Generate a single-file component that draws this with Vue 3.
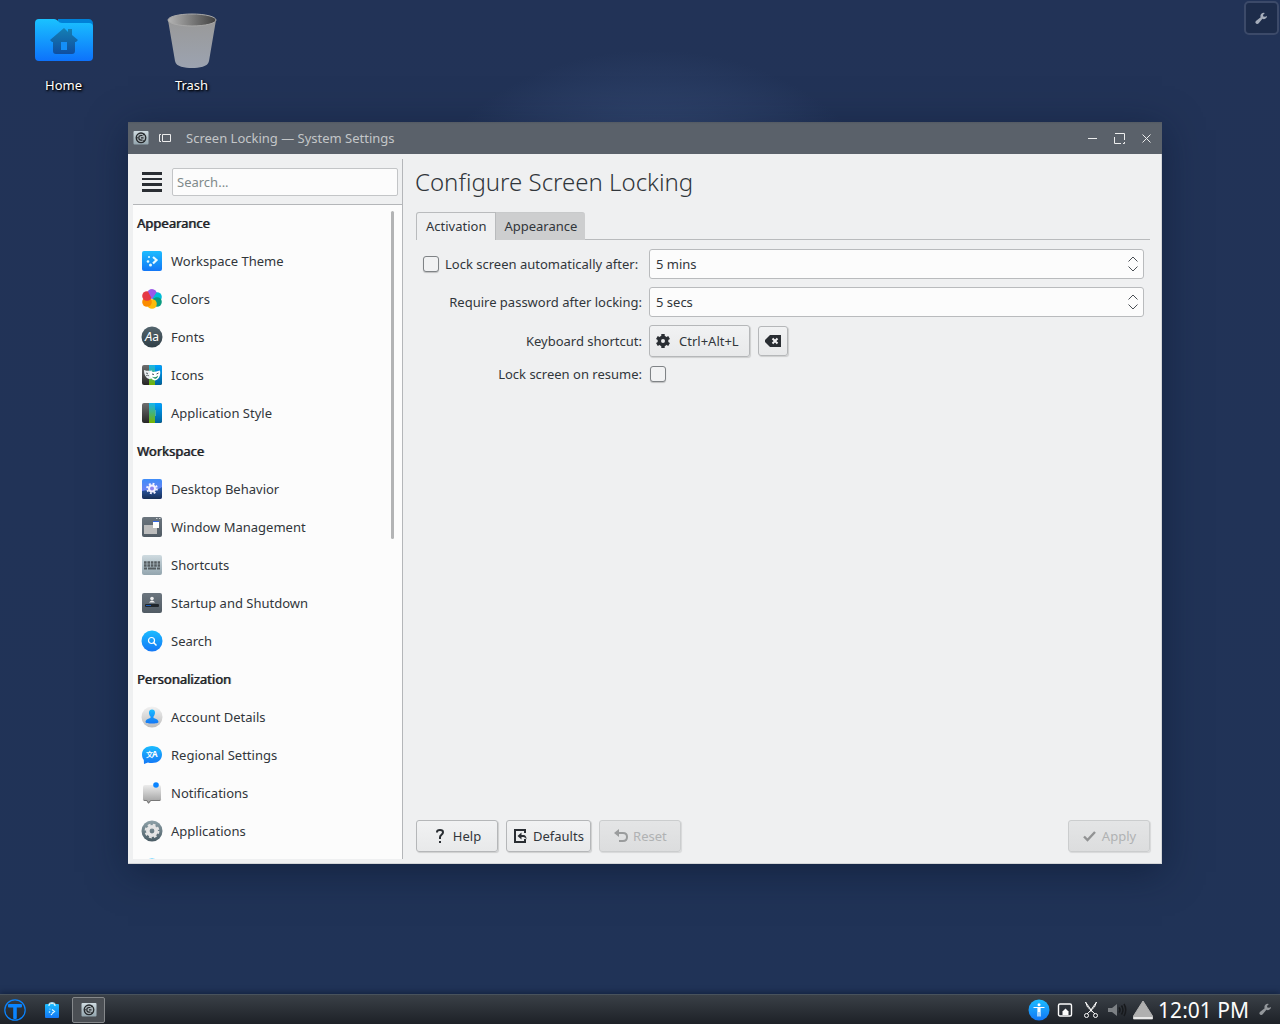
<script setup>
import { ref } from 'vue'

const lockDelay = ref('5 mins')
const passwordDelay = ref('5 secs')
const autoLock = ref(false)
const lockOnResume = ref(false)

const sections = [
  {
    title: 'Appearance',
    items: [
      { icon: 'theme', label: 'Workspace Theme' },
      { icon: 'colors', label: 'Colors' },
      { icon: 'fonts', label: 'Fonts' },
      { icon: 'icons', label: 'Icons' },
      { icon: 'style', label: 'Application Style' },
    ],
  },
  {
    title: 'Workspace',
    items: [
      { icon: 'desktop', label: 'Desktop Behavior' },
      { icon: 'window', label: 'Window Management' },
      { icon: 'shortcuts', label: 'Shortcuts' },
      { icon: 'startup', label: 'Startup and Shutdown' },
      { icon: 'search', label: 'Search' },
    ],
  },
  {
    title: 'Personalization',
    items: [
      { icon: 'account', label: 'Account Details' },
      { icon: 'regional', label: 'Regional Settings' },
      { icon: 'notifications', label: 'Notifications' },
      { icon: 'applications', label: 'Applications' },
      { icon: 'accounts', label: '' },
    ],
  },
]

const petals = [
  { x: 11, y: 6, c: '#9b59e8' },
  { x: 16, y: 9, c: '#00bcd8' },
  { x: 16, y: 14, c: '#0a9c80' },
  { x: 11, y: 16, c: '#fdbc0b' },
  { x: 6, y: 14, c: '#fb8c00' },
  { x: 6, y: 8, c: '#e53945' },
]
</script>

<template>
  <div class="screen">
    <svg class="defs" width="0" height="0" aria-hidden="true">
      <defs>
        <linearGradient id="blue" x1="0" y1="0" x2="0" y2="1"><stop offset="0" stop-color="#1cbcff" /><stop offset="1" stop-color="#1377f6" /></linearGradient>
        <linearGradient id="slate" x1="0" y1="0" x2="0" y2="1"><stop offset="0" stop-color="#54656e" /><stop offset="1" stop-color="#303e46" /></linearGradient>
        <linearGradient id="grey" x1="0" y1="0" x2="0" y2="1"><stop offset="0" stop-color="#6b757e" /><stop offset="1" stop-color="#515b64" /></linearGradient>
        <linearGradient id="pale" x1="0" y1="0" x2="0" y2="1"><stop offset="0" stop-color="#cfdbe0" /><stop offset="1" stop-color="#93a5ae" /></linearGradient>
        <linearGradient id="silver" x1="0" y1="0" x2="0" y2="1"><stop offset="0" stop-color="#f2f2f2" /><stop offset="1" stop-color="#bcbcbc" /></linearGradient>
        <linearGradient id="silver2" x1="0" y1="0" x2="0" y2="1"><stop offset="0" stop-color="#ececec" /><stop offset="1" stop-color="#999" /></linearGradient>
        <linearGradient id="steel" x1="0" y1="0" x2="0" y2="1"><stop offset="0" stop-color="#8fa2a9" /><stop offset="1" stop-color="#495b64" /></linearGradient>
        <linearGradient id="dark" x1="0" y1="0" x2="0" y2="1"><stop offset="0" stop-color="#6e6e6e" /><stop offset="1" stop-color="#262626" /></linearGradient>
        <linearGradient id="cyangreen" x1="0" y1="0" x2="0" y2="1"><stop offset="0" stop-color="#16b4ec" /><stop offset="1" stop-color="#76b300" /></linearGradient>
        <linearGradient id="deep" x1="0" y1="0" x2="0" y2="1"><stop offset="0" stop-color="#00a2ff" /><stop offset="1" stop-color="#00629a" /></linearGradient>
        <linearGradient id="sky" x1="0" y1="0" x2="0" y2="1"><stop offset="0" stop-color="#3f8df8" /><stop offset="1" stop-color="#8f7af0" /></linearGradient>
        <linearGradient id="night" x1="0" y1="0" x2="0" y2="1"><stop offset="0" stop-color="#2f5fb4" /><stop offset="1" stop-color="#172f55" /></linearGradient>
        <linearGradient id="folder" x1="0" y1="0" x2="0" y2="1"><stop offset="0" stop-color="#1ac2ff" /><stop offset="1" stop-color="#0d72fb" /></linearGradient>
        <linearGradient id="house" x1="0" y1="0" x2="0" y2="1"><stop offset="0" stop-color="#1580b4" /><stop offset="1" stop-color="#0f4ea0" /></linearGradient>
        <linearGradient id="bin" x1="0" y1="0" x2="0" y2="1"><stop offset="0" stop-color="#999" /><stop offset="1" stop-color="#9ca3b0" /></linearGradient>
        <linearGradient id="binhole" x1="0" y1="0" x2="1" y2="0"><stop offset="0" stop-color="#b4b4b4" /><stop offset="1" stop-color="#404040" /></linearGradient>
        <symbol id="wrench" viewBox="0 0 14 14">
          <path d="M13 4.200a3.600 3.600 0 0 1-5 3.200L4 12.200a1.900 1.900 0 0 1-3-2.600L6.100 5.700A3.600 3.600 0 0 1 10.600 1L8.600 3.100l.4 1.800 1.900.3z" />
        </symbol>
        <symbol id="lockapp" viewBox="0 0 16 16">
          <rect x="0.500" y="1" width="15" height="13.500" rx="1" fill="url(#pale)" />
          <circle cx="8" cy="7.800" r="4.800" fill="#a9b3b8" stroke="#25282b" stroke-width="1.300" />
          <path d="M9.500 5.500H8q-2.200 0-2.200 2.300T8 10.100h1.500M8 7.800h2.500" fill="none" stroke="#25282b" stroke-width="1.200" />
          <path d="M3.500 7.800h1.500M10 5l1.500-1M10 10.500l1.500 1" stroke="#25282b" />
        </symbol>
      </defs>
    </svg>

    <main class="desktop">
      <div class="shortcuts">
        <a class="shortcut" href="#home">
          <svg width="64" height="64" viewBox="0 0 64 64" aria-hidden="true">
            <path d="M26 11h31a5 5 0 0 1 4 5v14H26z" fill="#0081d8" />
            <path d="M7 11h15c4 0 4 4 8 4h27a4 4 0 0 1 4 4v30a4 4 0 0 1-4 4H7a4 4 0 0 1-4-4V15a4 4 0 0 1 4-4z" fill="url(#folder)" />
            <path d="M32 20l4 4v-3h4v6l6 5-2 2h-1v9a3 3 0 0 1-3 3H24a3 3 0 0 1-3-3v-9h-1l-2-2z" fill="url(#house)" />
            <rect x="29" y="34" width="6" height="8" fill="#148ff9" />
          </svg>
          <span>Home</span>
        </a>
        <a class="shortcut" href="#trash">
          <svg width="64" height="64" viewBox="0 0 64 64" aria-hidden="true">
            <path d="M8 12h48l-7 41c-1 6-10 7-17 7s-16-1-17-7z" fill="url(#bin)" />
            <ellipse cx="32" cy="12" rx="24" ry="6" fill="url(#binhole)" stroke="#a9a9a9" />
          </svg>
          <span>Trash</span>
        </a>
      </div>

      <button class="toolbox" type="button" aria-label="Configure desktop">
        <svg width="13" height="13"><use href="#wrench" /></svg>
      </button>

      <section class="window">
        <header class="titlebar">
          <svg width="16" height="16" aria-hidden="true"><use href="#lockapp" /></svg>
          <svg class="pin" width="12" height="8" viewBox="0 0 12 8" aria-hidden="true"><path d="M2 .5H.5v7H2M3.500 .5h8v7h-8z" fill="none" stroke="#eceded" /></svg>
          <h2>Screen Locking — System Settings</h2>
          <div class="controls">
            <button type="button" aria-label="Minimize"><svg width="11" height="11"><path d="M1 5.500h9" /></svg></button>
            <button type="button" aria-label="Maximize"><svg width="11" height="11"><path d="M1 .5h9.500V7M.5 4v6.500H7M9 10.500h1.500V9" /></svg></button>
            <button type="button" aria-label="Close"><svg width="11" height="11"><path d="M1.500 1.500l8 8M9.500 1.500l-8 8" /></svg></button>
          </div>
        </header>

        <div class="body">
          <aside class="sidebar">
            <div class="searchbar">
              <button class="menu" type="button" aria-label="Menu">
                <svg width="20" height="20" fill="#2a2e33"><rect width="20" height="3" /><rect y="6" width="20" height="2" /><rect y="11" width="20" height="3" /><rect y="17" width="20" height="3" /></svg>
              </button>
              <input type="search" placeholder="Search..." aria-label="Search" />
            </div>
            <div class="listwrap">
              <nav class="list">
                <template v-for="section in sections" :key="section.title">
                  <h3>{{ section.title }}</h3>
                  <a v-for="item in section.items" :key="item.icon" class="item" :href="'#' + item.icon">
                    <svg width="22" height="22" viewBox="0 0 22 22" aria-hidden="true">
                      <g v-if="item.icon === 'theme'">
                        <rect x="1" y="1" width="20" height="20" rx="2" fill="url(#blue)" />
                        <path d="M12 7l3.500 3L12 13.500" fill="none" stroke="#e8fbff" stroke-width="2.200" />
                        <g fill="#e8fbff"><circle cx="8" cy="7" r="1" /><circle cx="7" cy="11.500" r="1.300" /><circle cx="9.500" cy="15" r="1.500" /></g>
                      </g>
                      <g v-else-if="item.icon === 'colors'">
                        <circle v-for="p in petals" :key="p.c" :cx="p.x" :cy="p.y" r="4.800" :fill="p.c" />
                        <path d="M11 11L7 3.500a4.800 4.800 0 0 1 8.500 1L11 11z" fill="#9b59e8" />
                      </g>
                      <g v-else-if="item.icon === 'fonts'">
                        <circle cx="11" cy="11" r="10.500" fill="url(#slate)" />
                        <text x="4" y="15" font-family="Noto Sans, sans-serif" font-size="13" fill="#fff"><tspan font-style="italic">A</tspan><tspan font-size="12">a</tspan></text>
                      </g>
                      <g v-else-if="item.icon === 'icons' || item.icon === 'style'">
                        <rect x="1" y="1" width="20" height="20" rx="2" fill="url(#dark)" />
                        <path d="M14 1h5a2 2 0 0 1 2 2v16a2 2 0 0 1-2 2h-5z" fill="url(#deep)" />
                        <rect x="8" y="1" width="6" height="20" fill="url(#cyangreen)" />
                        <g v-if="item.icon === 'icons'">
                          <path d="M3 6c3 1 5 1 8 .5l1 5c-1 3-3 4-4 3.500-3-1-5-4-5-9z" fill="#e9eef0" />
                          <path d="M9 7.500c4 1 6 0 10-1 1 5-1 9-5 10-4-1-6-4-5-9z" fill="#fff" />
                          <path d="M11 10l2 .5M15.500 10l2-1" fill="none" stroke="#456" />
                          <path d="M11 12.500c2 1.500 4 1 6-1-.5 4-4 4-6 1z" fill="#168b5a" />
                          <path d="M5 9l2 .5M5 12c1-1 2-1 3 0" fill="none" stroke="#5b6266" />
                        </g>
                        <rect v-else x="14" y="8" width="1" height="6" fill="#47aeb0" />
                      </g>
                      <g v-else-if="item.icon === 'desktop'">
                        <rect x="1" y="1" width="20" height="20" rx="2" fill="url(#sky)" />
                        <path d="M1 13l5-1 5 1 5-1 5-3v10a2 2 0 0 1-2 2H3a2 2 0 0 1-2-2z" fill="url(#night)" />
                        <circle cx="11" cy="10.500" r="3" fill="#8f84f0" stroke="#f4f2ff" stroke-width="2" />
                        <circle cx="11" cy="10.500" r="4.800" fill="none" stroke="#f4f2ff" stroke-width="2" stroke-dasharray="1.885 1.885" />
                      </g>
                      <g v-else-if="item.icon === 'window'">
                        <rect x="1" y="1" width="20" height="20" rx="2" fill="url(#grey)" />
                        <path d="M15 2.500h1.500M18 2.500h1.500" stroke="#ccd0d3" />
                        <rect x="3" y="9" width="13" height="9" fill="#bcbcbc" />
                        <rect x="12" y="6" width="6" height="6" fill="#fff" /><rect x="12" y="5" width="6" height="1" fill="#3268e8" />
                      </g>
                      <g v-else-if="item.icon === 'shortcuts'">
                        <rect x="1" y="1" width="20" height="20" rx="2" fill="url(#pale)" />
                        <path d="M3 8.500h16M3 11.500h16" stroke="#555c60" stroke-width="2.400" stroke-dasharray="2.600 .8" />
                        <path d="M3 14.500h3M7 14.500h8M16 14.500h3" stroke="#555c60" stroke-width="2" />
                      </g>
                      <g v-else-if="item.icon === 'startup'">
                        <rect x="1" y="1" width="20" height="20" rx="2" fill="url(#grey)" />
                        <circle cx="11" cy="6.500" r="1.800" fill="#eee" /><path d="M8 10.500q3-4 6 0z" fill="#eee" />
                        <rect x="4" y="12" width="14" height="3" rx="1" fill="#20262c" /><rect x="5" y="13" width="5" height="1" fill="#1d5cb9" />
                      </g>
                      <g v-else-if="item.icon === 'search'">
                        <circle cx="11" cy="11" r="10.500" fill="url(#blue)" />
                        <circle cx="10.500" cy="10.500" r="3" fill="none" stroke="#fff" stroke-width="1.200" /><path d="M12.500 12.500l3 3" stroke="#fff" stroke-width="1.400" />
                      </g>
                      <g v-else-if="item.icon === 'account'">
                        <circle cx="11" cy="11" r="10.500" fill="url(#silver)" />
                        <path d="M11 3.500c4 0 3.500 5 1.500 7v1.500c2 .8 5 1.500 5 4 0 1-3 1.500-6.500 1.500s-6.500-.5-6.500-1.500c0-2.500 3-3.200 5-4v-1.500c-2-2-2.500-7 1.500-7z" fill="url(#blue)" />
                      </g>
                      <g v-else-if="item.icon === 'regional'">
                        <path d="M11 2c6 0 10 3.500 10 8.500S17 19 11 19c-2 0-3 0-4-.5L3 20l-.2-4C1.500 14.500 1 12.500 1 10.500 1 5.500 5 2 11 2z" fill="url(#blue)" />
                        <text x="5" y="13" font-size="7" font-weight="700" fill="#fff" font-family="Noto Sans CJK SC, sans-serif">文<tspan font-family="Noto Sans, sans-serif" font-size="8" x="11">A</tspan></text>
                      </g>
                      <g v-else-if="item.icon === 'notifications'">
                        <path d="M4 3h14a2 2 0 0 1 2 2v12a2 2 0 0 1-2 2h-8l-2.500 3L5.500 19H4a2 2 0 0 1-2-2V5a2 2 0 0 1 2-2z" fill="url(#silver2)" />
                        <path d="M2.500 17.800q0 .7 1.500.7h2l1.500 2.500 2-2.500H18q1.500 0 1.500-.7" fill="none" stroke="#777" />
                        <circle cx="15" cy="3" r="2.800" fill="#0a84ff" />
                      </g>
                      <g v-else-if="item.icon === 'applications'">
                        <circle cx="11" cy="11" r="10.500" fill="url(#steel)" />
                        <circle cx="11" cy="11" r="4.200" fill="none" stroke="#e4e4e4" stroke-width="3.600" />
                        <circle cx="11" cy="11" r="6.400" fill="none" stroke="#e4e4e4" stroke-width="2" stroke-dasharray="2.800 2.227" />
                      </g>
                      <circle v-else cx="11" cy="11" r="10.500" fill="url(#blue)" />
                    </svg>
                    <span>{{ item.label }}</span>
                  </a>
                </template>
              </nav>
              <div class="scroll"><div class="thumb"></div></div>
            </div>
          </aside>

          <section class="content">
            <h1>Configure Screen Locking</h1>
            <div class="tabs" role="tablist">
              <button class="tab active" type="button" role="tab" aria-selected="true">Activation</button>
              <button class="tab" type="button" role="tab" aria-selected="false">Appearance</button>
            </div>

            <form class="form" @submit.prevent>
              <div class="label check">
                <input id="auto" v-model="autoLock" type="checkbox" />
                <label for="auto">Lock screen automatically after:</label>
              </div>
              <div class="spin">
                <input v-model="lockDelay" type="text" aria-label="Lock delay" />
                <span class="steps">
                  <button type="button" aria-label="Increase"><svg width="10" height="6"><path d="M.5 5.500L5 1l4.500 4.500" /></svg></button>
                  <button type="button" aria-label="Decrease"><svg width="10" height="6"><path d="M.5 .5L5 5l4.500-4.500" /></svg></button>
                </span>
              </div>

              <label class="label" for="pwd">Require password after locking:</label>
              <div class="spin">
                <input id="pwd" v-model="passwordDelay" type="text" />
                <span class="steps">
                  <button type="button" aria-label="Increase"><svg width="10" height="6"><path d="M.5 5.500L5 1l4.500 4.500" /></svg></button>
                  <button type="button" aria-label="Decrease"><svg width="10" height="6"><path d="M.5 .5L5 5l4.500-4.500" /></svg></button>
                </span>
              </div>

              <label class="label" for="key">Keyboard shortcut:</label>
              <div class="keys">
                <button id="key" class="btn key" type="button">
                  <svg width="14" height="14" viewBox="0 0 14 14" fill="none" stroke="#2a2e33" aria-hidden="true"><circle cx="7" cy="7" r="3.700" stroke-width="3.400" /><path d="M7 0v2.500M7 11.500V14M.9 3.500l2.200 1.300M10.900 9.200l2.200 1.300M.9 10.500l2.200-1.300M10.900 4.800l2.200-1.300" stroke-width="3.400" /></svg>
                  Ctrl+Alt+L
                </button>
                <button class="btn clear" type="button" aria-label="Clear shortcut">
                  <svg width="16" height="12" viewBox="0 0 16 12"><path d="M5 0h11v12H5L0 7V5z" fill="#2a2e33" /><path d="M7.500 3.500l5 5M12.500 3.500l-5 5" stroke="#f4f4f5" stroke-width="2" /></svg>
                </button>
              </div>

              <label class="label" for="resume">Lock screen on resume:</label>
              <div class="resume"><input id="resume" v-model="lockOnResume" type="checkbox" /></div>
            </form>

            <footer class="actions">
              <button class="btn wide" type="button">
                <svg width="16" height="16" viewBox="0 0 16 16" aria-hidden="true"><path d="M4 4.500V4q0-2 3-2t3 2.200q0 1.300-1.500 2.500T7 9.300V11" fill="none" stroke="#2a2e33" stroke-width="2" /><rect x="6" y="13" width="2" height="2" fill="#2a2e33" /></svg>
                Help
              </button>
              <button class="btn" type="button">
                <svg width="16" height="16" viewBox="0 0 16 16" aria-hidden="true"><path d="M12 5V2H2v12h10v-3" fill="none" stroke="#2a2e33" stroke-width="2" /><path d="M4.500 8l4-3.500V7h2q3 0 3 4.500Q12.500 9 10.500 9h-2v2.500z" fill="#2a2e33" /></svg>
                Defaults
              </button>
              <button class="btn wide" type="button" disabled>
                <svg width="16" height="16" viewBox="0 0 16 16" aria-hidden="true"><path d="M4 5h6q4 0 4 4t-4 4H6" fill="none" stroke="#9a9c9d" stroke-width="2" /><path d="M1 5l5-4v8z" fill="#9a9c9d" /></svg>
                Reset
              </button>
              <button class="btn wide apply" type="button" disabled>
                <svg width="16" height="16" viewBox="0 0 16 16" aria-hidden="true"><path d="M2 8.500l3.500 3.500L13 4" fill="none" stroke="#929394" stroke-width="2.400" /></svg>
                Apply
              </button>
            </footer>
          </section>
        </div>
      </section>
    </main>

    <footer class="panel">
      <button class="start" type="button" aria-label="Application launcher">
        <svg width="22" height="22" viewBox="0 0 22 22"><circle cx="11" cy="11" r="10.200" fill="none" stroke="#0a84ff" stroke-width="1.200" /><g fill="#0a84ff"><rect x="4" y="5" width="14" height="3.500" rx="1" /><rect x="9.200" y="6" width="3.600" height="14" rx="1" /></g></svg>
      </button>
      <button class="task launcher" type="button" aria-label="Discover">
        <svg width="16" height="18" viewBox="0 0 16 18"><path d="M4.500 6V4q0-2.500 3.500-2.500T11.500 4v2" fill="none" stroke="#a5dcf3" /><rect x="1" y="3" width="14" height="14" rx="1" fill="url(#blue)" /><path d="M5 5v-.5q0-2 3-2t3 2V5M8 8.500l2.500 2L8 12.500" fill="none" stroke="#e4faff" stroke-width="1.200" /><g fill="#e4faff"><circle cx="6" cy="8" r=".6" /><circle cx="5.500" cy="11" r=".8" /><circle cx="7.500" cy="13.500" r=".8" /></g></svg>
      </button>
      <button class="task current" type="button" aria-label="Screen Locking">
        <svg width="16" height="16"><use href="#lockapp" /></svg>
      </button>
      <div class="tray">
        <svg class="access" width="22" height="22" viewBox="0 0 22 22"><circle cx="11" cy="11" r="10.500" fill="url(#blue)" /><circle cx="11" cy="5.800" r="1.500" fill="#fff" /><path d="M5.500 8.500h11M11 8v5M10 9v8.500M12 9v8.500" stroke="#fff" stroke-width="1.200" /></svg>
        <svg width="16" height="16" viewBox="0 0 16 16"><rect x="1.500" y="2" width="13" height="12" rx="1.500" fill="none" stroke="#fcfcfc" stroke-width="1.400" /><path d="M5.500 13V9.500l3-3 3 3V13z" fill="#fcfcfc" /></svg>
        <svg class="scissors" width="16" height="18" viewBox="0 0 16 18" fill="none" stroke="#fcfcfc"><path d="M2.500 1l2 5 7.500 7M13.500 1l-2 5L4 13M2.500 1L9.500 11M13.500 1l-7 10" /><circle cx="3.500" cy="14.500" r="2" /><circle cx="12.500" cy="14.500" r="2" /></svg>
        <svg class="volume" width="20" height="16" viewBox="0 0 20 16"><path d="M1 6h4l5-4v12l-5-4H1z" fill="#7c8084" /><path d="M12 5.500q2 2.500 0 5M14.500 3.500q3 4.500 0 9M17 2q3.500 6 0 12" fill="none" stroke="#17191c" stroke-width="1.500" /></svg>
        <svg class="arrow" width="22" height="22" viewBox="0 0 22 22"><path d="M11 2L20.500 17v3h-19v-3z" fill="#b0b0b0" stroke="#b0b0b0" stroke-linejoin="round" /><path d="M1.500 18h19v2h-19z" fill="#e8e8e8" /></svg>
        <time>12:01 PM</time>
        <button class="config" type="button" aria-label="Panel settings"><svg width="13" height="13"><use href="#wrench" /></svg></button>
      </div>
    </footer>
  </div>
</template>

<style>
body { margin: 0; }
</style>

<style scoped>
.screen, .screen * { box-sizing: border-box; }
.screen {
  display: flex;
  flex-direction: column;
  height: 100vh;
  overflow: hidden;
  font: 13px/18px "Noto Sans", sans-serif;
  color: #31363b;
  background: #213357;
}
.defs { position: absolute; }
svg { display: block; flex: none; }
button, input { font: inherit; color: inherit; margin: 0; padding: 0; }
button { background: none; border: 0; }
a { color: inherit; text-decoration: none; }
h1, h2, h3 { margin: 0; font-weight: 400; }

.desktop {
  position: relative;
  flex: 1;
  min-height: 0;
  background:
    radial-gradient(ellipse 250px 200px at 51% 250px, #405783 0%, #3a507c 40%, rgba(46, 66, 106, .7) 75%, rgba(33, 51, 87, 0) 100%),
    linear-gradient(#223357, #203357);
}
.shortcuts { display: flex; padding-top: 8px; }
.shortcut {
  display: flex;
  flex-direction: column;
  align-items: center;
  width: 128px;
  gap: 4px;
  color: #fff;
  text-shadow: 1px 1px 2px #000, 1px 1px 3px #000;
}
.shortcut span { padding-right: 1px; }
.toolbox {
  position: absolute;
  top: 1px;
  right: 1px;
  width: 35px;
  height: 34px;
  display: grid;
  place-items: center;
  border: 2px solid #3c4a69;
  border-radius: 5px;
  background: #1d2c4a;
}
.toolbox svg { fill: #a5adbb; }

.window {
  position: absolute;
  top: 122px;
  left: 128px;
  right: 118px;
  bottom: 130px;
  display: flex;
  flex-direction: column;
  background: #eff0f1;
  box-shadow: 0 8px 36px rgba(8, 20, 44, .5);
}
.titlebar {
  display: flex;
  align-items: center;
  height: 32px;
  padding: 0 10px 0 5px;
  background: linear-gradient(#535a63 0, #5a616a 2px, #5a616a);
  color: #c3c6c8;
}
.pin { margin: 0 15px 0 10px; }
.titlebar h2 { font-size: 13px; line-height: 18px; }
.controls { display: flex; gap: 16px; margin-left: auto; }
.controls svg { fill: none; stroke: #eceded; }
.body {
  display: flex;
  flex: 1;
  min-height: 0;
  padding: 5px 5px 4px;
  border: solid #d3d5d8;
  border-width: 0 1px 1px 0;
}
.sidebar {
  display: flex;
  flex-direction: column;
  width: 270px;
  border-right: 1px solid #b4b6b9;
}
.searchbar {
  display: flex;
  align-items: center;
  gap: 10px;
  height: 45px;
  padding: 0 4px 0 9px;
}
.searchbar input {
  flex: 1;
  min-width: 0;
  height: 28px;
  padding: 0 4px;
  background: #fcfcfc;
  border: 1px solid #c3c5c7;
  border-radius: 2px;
  appearance: none;
}
.searchbar input::placeholder { color: #808a8b; }
.listwrap {
  display: flex;
  flex: 1;
  min-height: 0;
  background: #fcfcfc;
  box-shadow: inset 0 1px #b4b6b9;
}
.list { flex: 1; overflow: hidden; padding: 0 4px; }
.list h3 {
  height: 38px;
  font-size: 13px;
  line-height: 38px;
  color: #1f2327;
  text-shadow: 1px 0 rgba(49, 54, 59, .5), 0 0 rgba(49, 54, 59, .8);
}
.item {
  display: flex;
  align-items: center;
  gap: 8px;
  height: 38px;
  padding-left: 4px;
}
.scroll { padding: 7px 8px 5px 0; }
.thumb { width: 3px; height: 51%; border-radius: 2px; background: #b3b4b5; }

.content {
  display: flex;
  flex-direction: column;
  flex: 1;
  min-width: 0;
  padding: 5px 6px 7px 13px;
}
h1 { font-size: 24px; line-height: 36px; font-weight: 300; margin-left: -1px; }
.tabs {
  display: flex;
  height: 28px;
  margin-top: 12px;
  box-shadow: inset 0 -1px #b9bbbd;
}
.tab {
  padding: 0 8px 1px;
  background: #cdcecf;
  border-top: 1px solid #c8cacb;
  border-radius: 0 3px 0 0;
}
.tab.active {
  padding: 0 9px 1px;
  background: #eff0f1;
  border: 1px solid #b9bbbd;
  border-bottom: 0;
  border-radius: 3px 0 0;
}
.form {
  display: grid;
  grid-template-columns: 219px 1fr;
  gap: 8px 7px;
  align-items: center;
  padding: 9px 6px 9px 7px;
}
.label { text-align: right; }
.check { display: flex; align-items: center; gap: 6px; text-align: left; }
input[type="checkbox"] {
  width: 16px;
  height: 16px;
  appearance: none;
  background: #f1f2f3;
  border: 1px solid #7f8386;
  border-radius: 3px;
  box-shadow: 0 1px 1px rgba(0, 0, 0, .2);
}
.spin {
  display: flex;
  height: 30px;
  border: 1px solid #b9bbbd;
  border-radius: 3px;
  background: #fcfcfc;
}
.spin input { flex: 1; min-width: 0; padding: 0 6px; background: none; border: 0; outline: 0; }
.steps { display: flex; flex-direction: column; justify-content: center; gap: 4px; padding-right: 5px; }
.steps svg { fill: none; stroke: #4a4f54; }
.keys { display: flex; align-items: center; gap: 8px; }
.btn {
  display: flex;
  align-items: center;
  justify-content: center;
  gap: 4px;
  height: 32px;
  padding: 0 6px;
  background: linear-gradient(#f1f2f3, #e8e9ea);
  border: 1px solid #b5b7b9;
  border-radius: 3px;
  box-shadow: 1px 1px 1px rgba(0, 0, 0, .14);
}
.key { gap: 9px; padding: 0 10px 0 6px; }
.clear { width: 30px; height: 30px; padding: 0; }
.wide { width: 82px; }
.btn:disabled {
  color: #b0b2b3;
  background: linear-gradient(#e4e5e6, #dcddde);
  border-color: #cbcdce;
  box-shadow: 1px 1px 1px rgba(0, 0, 0, .1);
}
.resume { height: 18px; padding: 1px; display: flex; }
.actions { display: flex; gap: 8px; margin-top: auto; }
.apply { margin-left: auto; }

.panel {
  display: flex;
  align-items: center;
  height: 30px;
  padding: 0 8px 0 4px;
  border-top: 1px solid #48525c;
  background: linear-gradient(#3a4047, #1d2127);
  position: relative;
  box-shadow: 0 -2px 5px rgba(10, 22, 46, .5);
}
.task {
  display: grid;
  place-items: center;
  width: 33px;
  height: 26px;
}
.launcher { margin: 0 4px 0 9px; }
.current { border: 1px solid #85888b; border-radius: 2px; background: #4b4f54; }
.tray { display: flex; align-items: center; margin-left: auto; }
.access { margin-right: 7px; }
.scissors { margin: 0 8px 0 10px; }
.arrow { margin: 0 4px 0 5px; }
.tray time { font-size: 21px; line-height: 26px; color: #fcfcfc; }
.config { margin-left: 10px; }
.config svg { fill: #93979b; }
</style>
